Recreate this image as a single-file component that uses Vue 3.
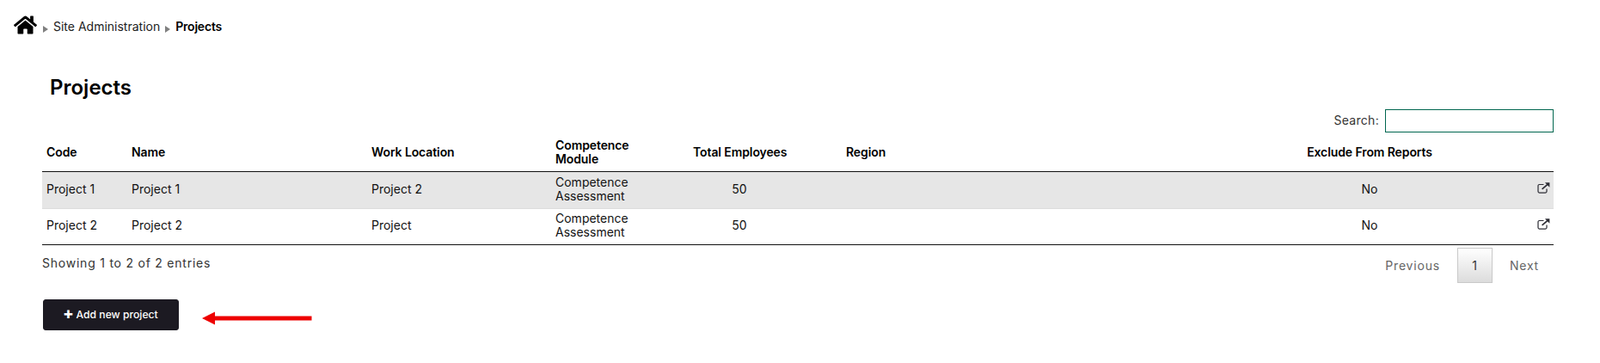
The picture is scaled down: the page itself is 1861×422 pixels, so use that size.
<template>
  <div class="page">
    <nav class="crumbs">
      <svg class="home" viewBox="0 0 576 512" fill="#000">
        <path d="M280.37 148.26L96 300.11V464a16 16 0 0 0 16 16l112.06-.29a16 16 0 0 0 15.92-16V368a16 16 0 0 1 16-16h64a16 16 0 0 1 16 16v95.64a16 16 0 0 0 16 16.05L464 480a16 16 0 0 0 16-16V300L295.67 148.26a12.19 12.19 0 0 0-15.3 0zM571.6 251.47L488 182.56V44.05a12 12 0 0 0-12-12h-56a12 12 0 0 0-12 12v72.61L318.47 43a48 48 0 0 0-61 0L4.34 251.47a12 12 0 0 0-1.6 16.9l25.5 31A12 12 0 0 0 45.15 301l235.22-193.74a12.19 12.19 0 0 1 15.3 0L530.9 301a12 12 0 0 0 16.9-1.6l25.5-31a12 12 0 0 0-1.7-16.93z" />
      </svg>
      <span class="tri"></span>
      <span class="site">Site Administration</span>
      <span class="tri"></span>
      <b>Projects</b>
    </nav>

    <h1>Projects</h1>

    <div class="wrap">
      <div class="search">
        <label for="q">Search:</label>
        <input id="q" type="text" />
      </div>

      <table>
        <colgroup>
          <col v-for="w in widths" :key="w.id" :style="{ width: w.px + 'px' }" />
        </colgroup>
        <thead>
          <tr>
            <th>Code</th>
            <th>Name</th>
            <th>Work Location</th>
            <th>Competence<br />Module</th>
            <th class="mid">Total Employees</th>
            <th class="region">Region</th>
            <th class="mid">Exclude From Reports</th>
            <th></th>
          </tr>
        </thead>
        <tbody>
          <tr v-for="(p, i) in projects" :key="i" :class="{ odd: i == 0 }">
            <td>{{ p.code }}</td>
            <td>{{ p.name }}</td>
            <td>{{ p.location }}</td>
            <td>Competence<br />Assessment</td>
            <td class="mid">50</td>
            <td></td>
            <td class="mid">No</td>
            <td class="end">
              <svg class="ext" viewBox="0 0 16 14" fill="none" stroke="#2c2c34">
                <path stroke-width="1.3" d="M8 2.7H2.6A1.6 1.6 0 0 0 1 4.3v7.1A1.6 1.6 0 0 0 2.6 13h7.6a1.6 1.6 0 0 0 1.6-1.6V8" />
                <path stroke-width="1.8" d="M6 8.6L13.2 2.2" />
                <path d="M9.6 0.4H15.4V6.2Z" fill="#2c2c34" stroke="none" />
              </svg>
            </td>
          </tr>
        </tbody>
      </table>

      <div class="below">
        <div class="info">Showing 1 to 2 of 2 entries</div>
        <div class="pager">
          <span>Previous</span>
          <span class="cur">1</span>
          <span>Next</span>
        </div>
      </div>

      <div class="actions">
        <button type="button"><span class="plus">✚</span> Add new project</button>
        <svg class="arrow" width="128" height="16" viewBox="0 0 128 16">
          <path d="M0 8L15 0.5V5.5H127.5V10.5H15V15.5Z" fill="#ee0000" />
        </svg>
      </div>
    </div>
  </div>
</template>

<script setup>
const widths = [
  { id: "code", px: 99 },
  { id: "name", px: 279 },
  { id: "loc", px: 214 },
  { id: "mod", px: 160 },
  { id: "tot", px: 118 },
  { id: "reg", px: 596 },
  { id: "exc", px: 156 },
  { id: "act", px: 136 }
];

const projects = [
  { code: "Project 1", name: "Project 1", location: "Project 2" },
  { code: "Project 2", name: "Project 2", location: "Project" }
];
</script>

<style>
body {
  background: #fff;
}
</style>

<style scoped>
.page {
  font-family: Inter, "Liberation Sans", sans-serif;
  font-size: 14px;
  color: #111;
  height: 422px;
  overflow: hidden;
}

.crumbs {
  display: flex;
  align-items: center;
  padding: 18px 0 0 16px;
  height: 22px;
  color: #222;
}
.crumbs b {
  font-weight: 600;
  color: #000;
  letter-spacing: -0.2px;
  padding-top: 2px;
}
.site {
  padding-top: 2px;
  margin-left: -1px;
}
.home {
  width: 27px;
  height: 24px;
  margin-right: 7px;
}
.tri {
  width: 0;
  height: 0;
  margin: 10px 7px 0 0;
  border-left: 6px solid #808080;
  border-top: 4.5px solid transparent;
  border-bottom: 4.5px solid transparent;
}
.site + .tri {
  margin-left: 6px;
  margin-right: 6px;
}

h1 {
  margin: 44px 0 0 58px;
  font-size: 24px;
  line-height: 36px;
  font-weight: 600;
  color: #000;
}

.wrap {
  margin: 0 54px 0 49px;
}

.search {
  display: flex;
  justify-content: flex-end;
  align-items: center;
  gap: 7px;
  margin-top: 7px;
  color: #333;
  letter-spacing: 0.3px;
}
.search label {
  padding-bottom: 2px;
}
.search input {
  width: 196px;
  height: 27px;
  box-sizing: border-box;
  border: 1px solid #00664f;
  padding: 0;
  background: #fff;
}

table {
  border-collapse: collapse;
  table-layout: fixed;
  width: 1758px;
  margin-top: 4px;
}
th,
td {
  padding: 3px 5px 6px;
  text-align: left;
  line-height: 16px;
  vertical-align: middle;
}
th {
  padding: 3px 5px 6px;
  font-weight: 600;
  color: #000;
  white-space: nowrap;
  letter-spacing: -0.1px;
  border-bottom: 1px solid #111;
}
.region {
  padding-left: 65px;
}
tbody tr {
  height: 41px;
}
tr.odd {
  height: 43px;
  background: #e6e6e6;
  border-bottom: 1px solid #ddd;
}
tbody tr:last-child {
  border-bottom: 1px solid #111;
}
tr.odd td {
  padding-top: 4px;
}
.mid {
  text-align: center;
}
.end {
  text-align: right;
  padding-right: 4px;
}
.ext {
  display: inline-block;
  width: 15px;
  height: 13px;
  vertical-align: middle;
  margin-bottom: 4px;
}

.below {
  display: flex;
  justify-content: space-between;
  align-items: flex-start;
  margin-top: 3px;
}
.info {
  color: #333;
  letter-spacing: 0.77px;
  padding-top: 9px;
}
.pager {
  display: flex;
  align-items: center;
  gap: 20px;
  padding-right: 17px;
  color: #666;
  letter-spacing: 0.8px;
}
.cur {
  width: 41px;
  height: 41px;
  box-sizing: border-box;
  display: flex;
  align-items: center;
  justify-content: center;
  border: 1px solid #c9c9c9;
  background: linear-gradient(#fff, #dcdcdc);
  color: #333;
}

.actions {
  display: flex;
  align-items: center;
  gap: 27px;
  margin: 19px 0 0 1px;
}
button {
  width: 158px;
  height: 36px;
  padding: 0 0 3px;
  border: 1px solid #1c1a22;
  border-radius: 3px;
  background: #1c1a22;
  color: #fff;
  font-family: inherit;
  font-size: 12.2px;
  font-weight: 500;
}
.plus {
  font-size: 13px;
}
.arrow {
  margin-top: 8px;
}
</style>
